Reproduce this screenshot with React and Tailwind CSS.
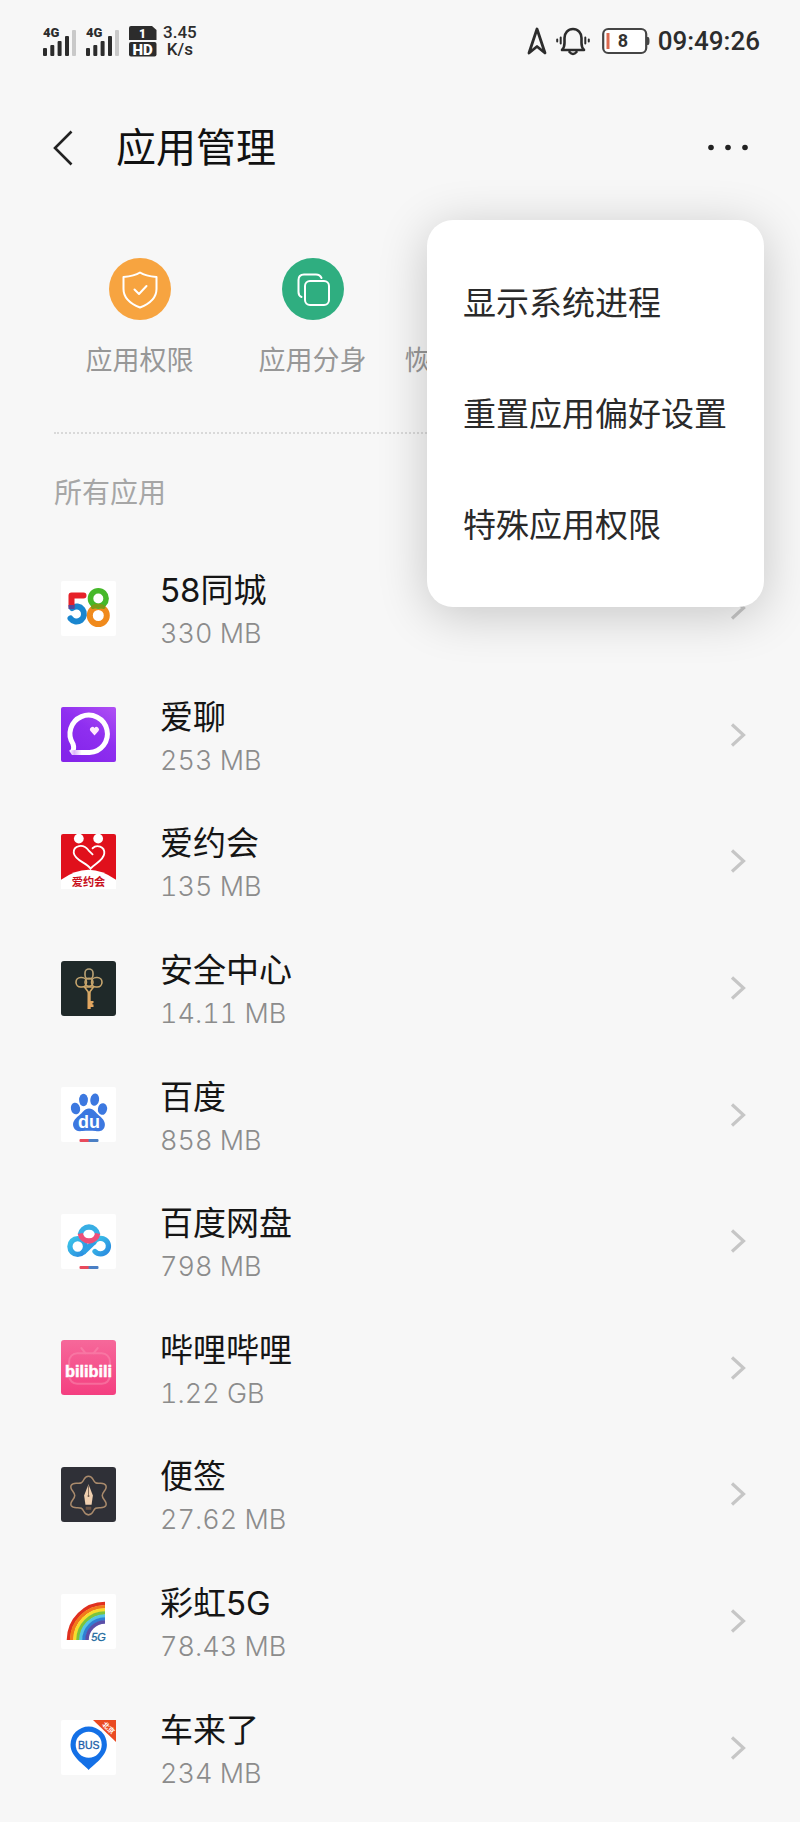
const ring = (r, color) => (
  <path key={r} d={`M${44 - r} 46 A${r} ${r} 0 0 1 44 ${46 - r}`} fill="none" stroke={color} strokeWidth="3.6" />
);

const Icon58 = () => (
  <svg viewBox="0 0 55 55" className="size-full">
    <rect width="55" height="55" rx="2" fill="#fff" />
    <g fill="none" strokeLinecap="round">
      <path d="M11 27 A7.5 7.5 0 1 1 9.5 37.5" stroke="#1a86cf" strokeWidth="6" />
      <path d="M22.500 14.500 H10.500 V25" stroke="#e62129" strokeWidth="6" strokeLinejoin="round" />
      <path d="M10.500 24 V28" stroke="#53479a" strokeWidth="6" strokeLinecap="butt" />
      <circle cx="37.300" cy="34.500" r="8.500" stroke="#f08a1c" strokeWidth="6" />
      <circle cx="37.300" cy="17.500" r="7.800" stroke="#46b82a" strokeWidth="5.600" />
      <path d="M32 26 Q37 23.500 42.500 26" stroke="#7d9a16" strokeWidth="4" />
    </g>
  </svg>
);

const IconChat = () => (
  <svg viewBox="0 0 55 55" className="size-full">
    <defs>
      <linearGradient id="violet" x1="1" y1="0" x2="0.300" y2="1">
        <stop offset="0" stopColor="#b050f4" />
        <stop offset="0.500" stopColor="#8f2ff0" />
        <stop offset="1" stopColor="#8424ea" />
      </linearGradient>
      <linearGradient id="tail" x1="0" y1="0" x2="1" y2="0">
        <stop offset="0" stopColor="#fff" />
        <stop offset="0.250" stopColor="#dcb4fa" />
        <stop offset="0.600" stopColor="#fff" />
      </linearGradient>
    </defs>
    <rect width="55" height="55" rx="2" fill="url(#violet)" />
    <path d="M10.500 45.500 C13 43 13.500 41 12 37 A18.700 18.700 0 1 1 28.500 45.500" fill="none" stroke="#fff" strokeWidth="5" />
    <path d="M8 43.500 L11 48 H29 V43 H14 Z" fill="url(#tail)" />
    <path d="M33.500 28.500 L29.500 24 a2.400 2.400 0 0 1 4-3 a2.400 2.400 0 0 1 4 3 Z" fill="#ffeafd" />
  </svg>
);

const IconDate = () => (
  <svg viewBox="0 0 54 54" className="size-full">
    <rect width="54" height="54" rx="2" fill="#e0101c" />
    <path d="M0 45 Q27 25 54 45 V54 H0 Z" fill="#fff" />
    <circle cx="17.500" cy="4.500" r="4.800" fill="#fff" />
    <circle cx="36.500" cy="4.500" r="4.800" fill="#fff" />
    <path d="M31 14 C35 10 43 12 42.500 19 C42 26 33 29 29 34 C25 28 13.500 26 12.500 18.500 C12 11 22 9 27 16 L31 20" fill="none" stroke="#fff" strokeWidth="1.800" strokeLinecap="round" />
    <text x="27" y="51" textAnchor="middle" fontSize="11" fontWeight="700" fill="#c8101c" fontFamily="Noto Sans CJK SC, sans-serif">爱约会</text>
  </svg>
);

const IconKey = () => (
  <svg viewBox="0 0 55 55" className="size-full">
    <defs>
      <linearGradient id="gold" gradientUnits="userSpaceOnUse" x1="0" y1="8" x2="0" y2="48">
        <stop offset="0" stopColor="#b3a077" />
        <stop offset="0.500" stopColor="#d0a868" />
        <stop offset="1" stopColor="#e8a65e" />
      </linearGradient>
    </defs>
    <rect width="55" height="55" rx="3" fill="#1f2929" />
    <g fill="none" stroke="url(#gold)" strokeWidth="1.600">
      <rect x="24" y="8" width="8" height="10" rx="4" />
      <rect x="15" y="16.500" width="10.500" height="9.500" rx="4.700" />
      <rect x="30.500" y="16.500" width="10.500" height="9.500" rx="4.700" />
      <circle cx="28" cy="21.300" r="4" />
      <path d="M23.500 26 L28 32 L32.500 26 Z" />
    </g>
    <path d="M26.500 31 H29.700 V40 H32.500 V42 H31.500 V43.500 H32.500 V46 H29.700 V48 H26.500 Z" fill="url(#gold)" />
  </svg>
);

const TwoToneBar = () => (
  <>
    <rect x="18.500" y="52" width="10" height="3" rx="1" fill="#e84a5c" />
    <rect x="27.500" y="52" width="10" height="3" rx="1" fill="#4a7fc4" />
  </>
);

const IconBaidu = () => (
  <svg viewBox="0 0 55 55" className="size-full">
    <rect width="55" height="55" rx="2" fill="#fff" />
    <g fill="#3c78e0">
      <ellipse cx="14.500" cy="21.500" rx="4.600" ry="5.900" transform="rotate(-12 14.500 21.500)" />
      <ellipse cx="22.500" cy="13" rx="4.400" ry="6.200" />
      <ellipse cx="33.700" cy="12.700" rx="4.400" ry="6.200" transform="rotate(10 33.700 12.700)" />
      <ellipse cx="41.500" cy="22" rx="4.600" ry="5.900" transform="rotate(10 41.500 22)" />
      <path d="M28 21.500 C33 21.500 34.500 25.500 38 28.500 C42.500 32 45 36 43.500 40 C42 44.500 38 44.500 34.500 44 C30 43.500 26 43.500 21.500 44 C17 44.500 14 44 12.500 40 C11 35.500 13.500 32 18 28.500 C22 25.500 23 21.500 28 21.500 Z" />
    </g>
    <text x="28" y="41" textAnchor="middle" fontSize="18" fontWeight="700" fill="#fff" fontFamily="Liberation Sans, sans-serif">du</text>
    <TwoToneBar />
  </svg>
);

const IconNetdisk = () => (
  <svg viewBox="0 0 55 55" className="size-full">
    <defs>
      <linearGradient id="sky" x1="0" y1="0" x2="1" y2="1">
        <stop offset="0" stopColor="#3cc4e8" />
        <stop offset="1" stopColor="#2a8be0" />
      </linearGradient>
    </defs>
    <rect width="55" height="55" rx="2" fill="#fff" />
    <g fill="none" strokeWidth="5.300">
      <circle cx="16.700" cy="32.500" r="7.800" stroke="url(#sky)" />
      <path d="M34 37.500 A7.800 7.800 0 1 0 33 28" stroke="url(#sky)" strokeLinecap="round" />
      <path d="M22 38.500 L33.500 27.500" stroke="#2f9fe4" />
      <path d="M19.300 20.500 A8.800 8.800 0 0 1 36.700 20.500" stroke="#38aee4" />
      <path d="M36.700 19.500 A8.800 8.800 0 0 1 19.300 19.500" stroke="#ee4f78" />
    </g>
    <TwoToneBar />
  </svg>
);

const IconBili = () => (
  <svg viewBox="0 0 54 54" className="size-full">
    <defs>
      <linearGradient id="pink" x1="0" y1="0" x2="0" y2="1">
        <stop offset="0" stopColor="#f6689a" />
        <stop offset="1" stopColor="#f43f80" />
      </linearGradient>
    </defs>
    <rect width="54" height="54" rx="3" fill="url(#pink)" />
    <g fill="none" stroke="#fa8fb2" strokeWidth="2" strokeLinecap="round" opacity="0.500">
      <path d="M20 8 L24 13 M36 8 L32 13" />
      <rect x="8" y="13" width="40" height="30" rx="8" />
    </g>
    <text x="27" y="36" textAnchor="middle" fontSize="16" fontWeight="700" fill="#fff" stroke="#fff" strokeWidth="0.500" fontFamily="Liberation Sans, sans-serif">bilibili</text>
  </svg>
);

const IconNote = () => (
  <svg viewBox="0 0 54 54" className="size-full">
    <rect width="54" height="54" rx="3" fill="#2f3037" />
    <path d="M27 9 C32 9 31 14 34 15.500 C37 17 42 14 44 18 C46 22 40.500 24 40.500 28 C40.500 32 46 34 44 38 C42 41.500 37 39 34 40.500 C31 42 32 47 27 47 C22 47 23 42 20 40.500 C17 39 12 41.500 10 38 C8 34 13.500 32 13.500 28 C13.500 24 8 22 10 18 C12 14 17 17 20 15.500 C23 14 22 9 27 9 Z" fill="none" stroke="#a98a6c" strokeWidth="1.500" />
    <path d="M27 17 L31.300 28 L30 37 H24 L22.700 28 Z" fill="#f0cfb0" />
    <path d="M27 18 V28" stroke="#6a5548" strokeWidth="0.800" />
    <circle cx="27" cy="28.500" r="1" fill="#6a5548" />
    <path d="M24.300 39 H29.700 V42 H24.300 Z" fill="#6b5345" />
  </svg>
);

const IconRainbow = () => (
  <svg viewBox="0 0 55 55" className="size-full">
    <rect width="55" height="55" rx="2" fill="#fff" />
    {ring(36.5, "#e0301e")}
    {ring(33.3, "#f27a1a")}
    {ring(30, "#f8dc2c")}
    {ring(27, "#7cc43c")}
    {ring(24, "#54c4e4")}
    {ring(21, "#2f7fd4")}
    {ring(18, "#5b4fa8")}
    <text x="37.500" y="46.500" textAnchor="middle" fontSize="11" fontStyle="italic" fill="#1c6a9e" stroke="#1c6a9e" strokeWidth="0.300" fontFamily="Liberation Sans, sans-serif">5G</text>
  </svg>
);

const IconBus = () => (
  <svg viewBox="0 0 55 55" className="size-full">
    <rect width="55" height="55" rx="2" fill="#fff" />
    <path d="M27.700 50 C24 45 9.500 37 9.500 24.700 A18.200 18.200 0 0 1 45.900 24.700 C45.900 37 31.500 45 27.700 50 Z" fill="#1470e6" />
    <circle cx="27.700" cy="24.700" r="13" fill="#fff" />
    <text x="27.700" y="28.700" textAnchor="middle" fontSize="10.500" fill="#1a5ea8" stroke="#1a5ea8" strokeWidth="0.300" fontFamily="Liberation Sans, sans-serif">BUS</text>
    <path d="M32 0 H55 V22 Z" fill="#ea4a22" />
    <text x="47.500" y="10.500" textAnchor="middle" fontSize="7" fontWeight="700" fill="#fff" transform="rotate(43 47.500 8)" fontFamily="Noto Sans CJK SC, sans-serif">北京</text>
  </svg>
);

const APPS = [
  { name: "58同城", size: "330 MB", Icon: Icon58 },
  { name: "爱聊", size: "253 MB", Icon: IconChat },
  { name: "爱约会", size: "135 MB", Icon: IconDate },
  { name: "安全中心", size: "14.11 MB", Icon: IconKey },
  { name: "百度", size: "858 MB", Icon: IconBaidu },
  { name: "百度网盘", size: "798 MB", Icon: IconNetdisk },
  { name: "哔哩哔哩", size: "1.22 GB", Icon: IconBili },
  { name: "便签", size: "27.62 MB", Icon: IconNote },
  { name: "彩虹5G", size: "78.43 MB", Icon: IconRainbow },
  { name: "车来了", size: "234 MB", Icon: IconBus },
];

const Signal = () => (
  <svg viewBox="0 -3 33 36" className="h-9 w-[33px]">
    <text x="0" y="11" fontSize="13" fontWeight="900" fill="#2c2c2c" fontFamily="Roboto, sans-serif">4G</text>
    <g fill="#2c2c2c">
      <rect x="0" y="22" width="4" height="8" rx="1" />
      <rect x="7.300" y="19" width="4" height="11" rx="1" />
      <rect x="14.600" y="15" width="4" height="15" rx="1" />
      <rect x="22" y="10" width="4" height="20" rx="1" />
    </g>
    <rect x="29" y="4" width="4" height="26" rx="1" fill="#c9c9c9" />
  </svg>
);

const StatusBar = () => (
  <div className="flex h-[82px] items-center justify-between pr-10 pl-[43px] font-[Roboto,sans-serif] text-[#2c2c2c]">
    <div className="flex items-center gap-[10px]">
      <Signal />
      <Signal />
      <svg viewBox="0 0 28 31" className="h-[31px] w-7">
        <path d="M2 0 H23 L27.500 4 V14 H0 V2 Q0 0 2 0 Z" fill="#2c2c2c" />
        <rect y="16" width="27.500" height="14.500" rx="2" fill="#2c2c2c" />
        <text x="13.500" y="11.500" textAnchor="middle" fontSize="12" fontWeight="900" fill="#fff" fontFamily="Roboto, sans-serif">1</text>
        <text x="13.700" y="28.500" textAnchor="middle" fontSize="15" fontWeight="900" fill="#fff" fontFamily="Roboto, sans-serif">HD</text>
      </svg>
      <div className="-ml-1 text-center text-[17px] leading-[17px] font-medium">
        <div>3.45</div>
        <div>K/s</div>
      </div>
    </div>
    <div className="flex items-center">
      <svg viewBox="0 0 20 30" className="h-[30px] w-5" fill="none" stroke="#2c2c2c" strokeWidth="2.800" strokeLinejoin="round">
        <path d="M10 3 L18 27 L10 20.500 L2 27 Z" />
      </svg>
      <svg viewBox="0 0 34 30" className="ml-[9px] h-[30px] w-[34px]" fill="none" stroke="#2c2c2c" strokeWidth="2.600" strokeLinecap="round" strokeLinejoin="round">
        <path d="M6 24 H28 C26 22 25.500 20 25.500 17 V12 C25.500 7 22 3 17 3 C12 3 8.500 7 8.500 12 V17 C8.500 20 8 22 6 24 Z" />
        <path d="M13.500 26 Q17 30 20.500 26" />
        <path d="M4.700 11.500 V17.500 M1.200 13.500 V15.500 M29.300 11.500 V17.500 M32.800 13.500 V15.500" strokeWidth="2" />
      </svg>
      <svg viewBox="0 0 48 28" className="ml-3 h-7 w-12">
        <rect x="1.200" y="2" width="43" height="24" rx="5" fill="#fff" stroke="#454545" strokeWidth="2.200" />
        <path d="M45 10 H46 Q47.500 10 47.500 14 Q47.500 18 46 18 H45 Z" fill="#454545" />
        <rect x="4.500" y="6" width="3" height="16" fill="#dc6a50" />
        <text x="21" y="20" textAnchor="middle" fontSize="18" fontWeight="700" fill="#333" fontFamily="Roboto, sans-serif">8</text>
      </svg>
      <time className="ml-2 text-[26px] leading-8 font-medium">09:49:26</time>
    </div>
  </div>
);

const MENU = ["显示系统进程", "重置应用偏好设置", "特殊应用权限"];

const Header = () => (
  <header className="relative flex h-[132px] items-center justify-between px-[50px]">
    <div className="flex items-center">
      <button type="button" aria-label="返回" className="flex h-12 w-[66px] items-center">
        <svg viewBox="0 0 26 36" className="h-9 w-[26px]" fill="none" stroke="#222" strokeWidth="2.600">
          <path d="M21.500 1.500 L5 18 L21.500 34.500" />
        </svg>
      </button>
      <h1 className="text-[40px] leading-[56px] font-normal text-[#111]">应用管理</h1>
    </div>
    <button type="button" aria-label="更多" aria-expanded="true" className="flex h-12 w-12 items-center justify-end">
      <svg viewBox="0 0 44 8" className="h-2 w-11" fill="#222">
        <circle cx="5" cy="3.500" r="2.800" />
        <circle cx="22" cy="3.500" r="2.800" />
        <circle cx="39" cy="3.500" r="2.800" />
      </svg>
    </button>
    <ul role="menu" className="absolute top-[138px] right-9 z-10 rounded-[26px] bg-white pt-7 pb-[26px] shadow-[0_8px_50px_rgba(0,0,0,0.2)]">
      {MENU.map((label) => (
        <li key={label} role="none">
          <button type="button" role="menuitem" className="flex h-[111px] w-full items-center px-9 pr-[37px] text-[33px] whitespace-nowrap text-[#2a2a2a]">
            {label}
          </button>
        </li>
      ))}
    </ul>
  </header>
);

const SHORTCUTS = [
  {
    label: "应用权限",
    tone: "bg-[#f7a440]",
    art: (
      <>
        <path d="M31 14.500 C35.500 17.500 41 18.500 47.500 19 V31 C47.500 40.500 40 46 31 49.500 C22 46 14.500 40.500 14.500 31 V19 C21 18.500 26.500 17.500 31 14.500 Z" />
        <path d="M25.500 31.500 L30 36 L37.500 28" />
      </>
    ),
  },
  {
    label: "应用分身",
    tone: "bg-[#2fae80]",
    art: (
      <>
        <rect x="23" y="23" width="24" height="24" rx="5" />
        <path d="M19.500 39 Q16.500 38 16.500 34 V22 Q16.500 16.500 22 16.500 H34 Q38 16.500 39.500 20" />
      </>
    ),
  },
  {
    label: "恢复系统应用",
    tone: "bg-[#4a8df0]",
    art: <path d="M18 31 A13 13 0 1 0 22 21.500 M22 15 V22 H29" />,
  },
];

const Chevron = () => (
  <svg viewBox="0 0 16 24" className="h-6 w-4 shrink-0" fill="none" stroke="#c6c6c6" strokeWidth="3.200">
    <path d="M2 1.500 L13.500 12 L2 22.500" />
  </svg>
);

export default function App() {
  return (
    <div className='flex min-h-screen flex-col overflow-hidden bg-[#f7f7f7] font-["Inter","Noto_Sans_CJK_SC",sans-serif]'>
      <StatusBar />
      <Header />
      <nav className="flex h-[218px] pt-11 pl-[53px]">
        {SHORTCUTS.map(({ label, tone, art }) => (
          <button key={label} type="button" className="flex w-[173px] shrink-0 flex-col items-center gap-[21px]">
            <span className={`${tone} size-[62px] rounded-full`}>
              <svg viewBox="0 0 62 62" className="size-full" fill="none" stroke="#fff" strokeWidth="2" strokeLinecap="round" strokeLinejoin="round">
                {art}
              </svg>
            </span>
            <span className="text-[27px] leading-10 whitespace-nowrap text-[#979797]">{label}</span>
          </button>
        ))}
      </nav>
      <main className="mx-[54px] flex grow flex-col border-t-2 border-dotted border-[#d9d9d9]">
        <h2 className="pt-[39px] text-[28px] leading-10 font-normal text-[#a6a6a6]">所有应用</h2>
        <ul className="mt-8 grid grow auto-rows-fr pb-[11px]">
          {APPS.map(({ name, size, Icon }) => (
            <li key={name} className="flex">
              <a href="#" className="flex grow items-center pl-[7px]">
                <span className="size-[55px] shrink-0">
                  <Icon />
                </span>
                <span className="ml-11 flex grow flex-col pt-2">
                  <span className="text-[33px] leading-[43px] text-[#151515]">{name}</span>
                  <span className="text-[27px] leading-[43px] font-light text-[#8c8c8c] tabular-nums">{size}</span>
                </span>
                <Chevron />
              </a>
            </li>
          ))}
        </ul>
      </main>
    </div>
  );
}
